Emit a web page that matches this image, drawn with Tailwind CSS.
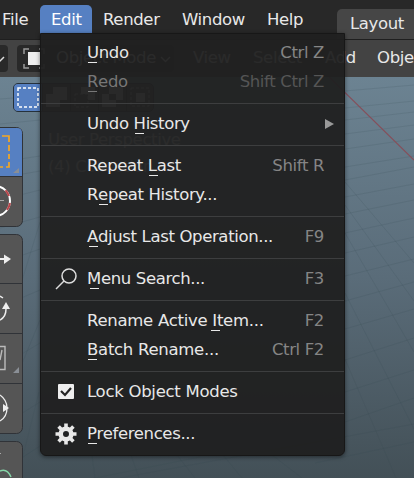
<!DOCTYPE html>
<html lang="en">
<head>
<meta charset="utf-8">
<title>Edit menu</title>
<script src="https://cdn.jsdelivr.net/npm/@tailwindcss/browser@4"></script>
</head>
<body class="relative h-[478px] w-[414px] overflow-hidden bg-[#50616c] font-['DejaVu_Sans',sans-serif] text-[16.5px] tracking-[-0.36px] text-[#e8e8e8]">
<!-- Top bar -->
<header class="flex h-[39px] items-center bg-[#282828] whitespace-nowrap leading-[29px]">
  <span class="w-[40px] shrink-0 pl-[2px]">File</span>
  <span class="mt-[-1px] h-[29px] w-[52px] shrink-0 rounded-t-[5px] bg-[#5680c2] pl-[11px] text-white">Edit</span>
  <span class="w-[79px] shrink-0 pl-[11px]">Render</span>
  <span class="w-[85px] shrink-0 pl-[11px]">Window</span>
  <span class="w-[81px] shrink-0 pl-[11px]">Help</span>
  <span class="mt-[9px] h-[30px] w-[80px] shrink-0 rounded-tl-[5px] bg-[#464646] pl-[13px] leading-[29px]">Layout</span>
</header>
<!-- Editor header -->
<div class="flex h-[38px] items-center border-t border-[#1f1f1f] bg-[#434343] whitespace-nowrap">
  <div class="flex h-[27px] w-[8px] shrink-0 items-center overflow-hidden rounded-r-[4px] bg-[#292929]"><svg class="shrink-0" width="8" height="27"><path d="M-3 13L0 16L4 12" fill="none" stroke="#ddd" stroke-width="1.5"/></svg></div>
  <div class="ml-[9px] flex h-[27px] w-[157px] shrink-0 items-center rounded-[4px] bg-[#292929]">
    <svg class="ml-[5px] mr-[11px] shrink-0" width="23" height="23"><path d="M2 7V2H7M17 2H22V7M2 17V21H7M17 21H22V17" fill="none" stroke="#999" stroke-width="1.5"/><path d="M6 5H18V18H6Z" fill="#eee"/></svg>
    <span class="w-[104px] shrink-0">Object Mode</span>
    <svg class="shrink-0" width="11" height="12"><path d="M1 4L5.500 8.500L10 4" fill="none" stroke="#ddd" stroke-width="1.5"/></svg>
  </div>
  <span class="ml-[19px] w-[60px] shrink-0">View</span>
  <span class="w-[72px] shrink-0">Select</span>
  <span class="w-[52px] shrink-0">Add</span>
  <span class="shrink-0">Object</span>
</div>
<!-- Viewport -->
<main class="relative h-[401px] overflow-hidden bg-linear-to-b from-[#6c8392] via-[#5a6c79] to-[#435057]">
  <svg class="absolute inset-0" width="414" height="401">
    <g stroke="#35454e" stroke-opacity=".14" fill="none">
      <path d="M0 22L40 19M0 47L40 43M0 85L40 79M0 101L40 94M0 123L40 113M0 151L40 140M0 186L40 172M0 230L40 213M0 290L40 266M0 350L40 325M0 395L40 369M0 420L200 380M120 401L414 347"/>
      <path d="M345 14L414 8M345 31L414 24M345 43L414 35M345 57L414 48M345 72L414 62M345 90L414 79M345 103L414 90M345 120L414 107M345 137L414 123M345 156L414 141M345 176L414 160M345 199L414 182M345 224L414 205M345 252L414 232M345 283L414 261M345 315L414 293M345 345L414 321M315 386L414 365"/>
      <path d="M20 210L40 145M0 340L40 243M20 391L39 315M92 378L95 401M131 378L139 401M177 378L195 401M223 378L242 401M272 378L302 401M345 282L396 401M345 216L414 352M345 156L414 275M345 128L414 224M345 105L414 186"/>
    </g>
    <path d="M325 -4L414 83" stroke="#854f5b" stroke-width="1.200"/>
  </svg>
  <!-- Selection modes -->
  <div class="absolute left-[13px] top-[6px] flex h-[29px] w-[141px] overflow-hidden rounded-[5px] border border-[#26313b] bg-[#555]">
    <div class="h-full w-[28px] shrink-0 bg-[#5680c2]"><svg width="28" height="27"><rect x="4" y="4" width="20" height="19" fill="none" stroke="#fff" stroke-width="1.500" stroke-dasharray="3 2"/></svg></div>
    <svg class="shrink-0 border-l border-[#333]" width="28" height="27"><path d="M3 23V10H10V3H24V16H17V23Z" fill="#ccc"/></svg>
    <svg class="shrink-0 border-l border-[#333]" width="28" height="27"><path d="M10 3H24V16H17V10H10Z" fill="#ccc"/><rect x="4" y="10" width="13" height="13" fill="none" stroke="#ccc" stroke-dasharray="3 2"/></svg>
    <svg class="shrink-0 border-l border-[#333]" width="28" height="27"><path d="M3 10H10V3H24V16H17V23H3ZM10 10V16H17V10Z" fill="#ccc" fill-rule="evenodd"/></svg>
    <svg class="shrink-0 border-l border-[#333]" width="28" height="27"><rect x="4" y="4" width="18" height="18" fill="none" stroke="#ccc" stroke-dasharray="3 2"/><path d="M9 9H18V18H9Z" fill="#ccc"/></svg>
  </div>
  <div class="absolute left-[48px] top-[49px] leading-[27px] text-white/90">User Perspective<br>(4) Collection</div>
  <!-- Toolbar -->
  <svg class="absolute left-0 top-0" width="24" height="401" fill="none">
    <g fill="#555" stroke="#303338">
      <rect x="-20" y="50.500" width="42.500" height="99" rx="6"/>
      <rect x="-20" y="157.500" width="42.500" height="199" rx="6"/>
      <rect x="-20" y="364.500" width="42.500" height="60" rx="6"/>
      <path d="M0 206.500H22M0 256.500H22M0 306.500H22"/>
    </g>
    <path d="M-20 51H17Q22 51 22 56V99H-20Z" fill="#5680c2"/>
    <path d="M0 99.500H22" stroke="#303338"/>
    <path d="M2 59H9V65M9 68V74M9 77V82M9 85V90H6M3 90H-1" stroke="#f5a623" stroke-width="1.700"/>
    <path d="M19 91V96H13ZM19 290V296H13Z" fill="#8a8f96"/>
    <circle cx="-5" cy="124" r="15" stroke="#fff" stroke-width="2"/>
    <path d="M5.500 113.300A15 15 0 0 1 9 119M10 126A15 15 0 0 1 7 133" stroke="#b8474c" stroke-width="2"/>
    <path d="M0 123.500H4" stroke="#aaa"/>
    <path d="M0 182H5" stroke="#eee" stroke-width="2"/><path d="M4 177.500L11 182L4 187Z" fill="#eee"/>
    <path d="M0 219L3 221M0 243Q6 240 6 232" stroke="#eee" stroke-width="1.500"/><path d="M6 225L10 232H2Z" fill="#eee"/>
    <path d="M0 269.500H5V292.500H0M0 283L2 273" stroke="#bbb" stroke-width="1.400"/>
    <path d="M0 318Q7 323 7 331Q7 340 0 344" stroke="#eee" stroke-width="1.300"/><path d="M3 327L9 331L3 335Z" fill="#eee"/>
    <path d="M0 377L1 376" stroke="#aaa"/><path d="M0 394Q7 391 11 400" stroke="#86d6a8" stroke-width="1.500"/>
  </svg>
</main>
<!-- Edit menu -->
<nav class="absolute left-[40px] top-[33px] w-[305px] rounded-b-[6px] border border-[#171717] bg-[#202020]/95 pt-[4px] pb-[7px] leading-[29px] whitespace-nowrap shadow-[0_1px_4px_rgba(0,0,0,0.5)]">
  <div class="flex h-[29px] justify-between pr-[20px] pl-[46px]"><span><span class="relative inline-block after:absolute after:left-px after:top-[24px] after:h-px after:w-[9px] after:bg-current">U</span>ndo</span><span class="text-[#858585]">Ctrl Z</span></div>
  <div class="flex h-[29px] justify-between pr-[20px] pl-[46px] text-[#777]"><span><span class="relative inline-block after:absolute after:left-px after:top-[24px] after:h-px after:w-[9px] after:bg-current">R</span>edo</span><span class="text-[#555]">Shift Ctrl Z</span></div>
  <hr class="mt-[7px] mb-[5px] border-[#3d3e3f]">
  <div class="flex h-[29px] items-center justify-between pr-[10px] pl-[46px]"><span>Undo <span class="relative inline-block after:absolute after:left-px after:top-[24px] after:h-px after:w-[9px] after:bg-current">H</span>istory</span><svg width="9" height="10"><path d="M0 0L9 5L0 10Z" fill="#999"/></svg></div>
  <hr class="mt-[7px] mb-[5px] border-[#3d3e3f]">
  <div class="flex h-[29px] justify-between pr-[20px] pl-[46px]"><span>Repeat <span class="relative inline-block after:absolute after:left-px after:top-[24px] after:h-px after:w-[9px] after:bg-current">L</span>ast</span><span class="text-[#858585]">Shift R</span></div>
  <div class="flex h-[29px] pl-[46px]"><span>R<span class="relative inline-block after:absolute after:left-px after:top-[24px] after:h-px after:w-[9px] after:bg-current">e</span>peat History...</span></div>
  <hr class="mt-[7px] mb-[5px] border-[#3d3e3f]">
  <div class="flex h-[29px] justify-between pr-[20px] pl-[46px]"><span><span class="relative inline-block after:absolute after:left-[2px] after:top-[24px] after:h-px after:w-[9px] after:bg-current">A</span>djust Last Operation...</span><span class="text-[#858585]">F9</span></div>
  <hr class="mt-[7px] mb-[5px] border-[#3d3e3f]">
  <div class="flex h-[29px] items-center pr-[20px] pl-[14px]"><svg class="mr-[10px]" width="22" height="22" fill="none" stroke="#ddd" stroke-width="1.500"><circle cx="14" cy="8" r="7"/><path d="M9 13L1 21"/></svg><span><span class="relative inline-block after:absolute after:left-[3px] after:top-[24px] after:h-px after:w-[9px] after:bg-current">M</span>enu Search...</span><span class="ml-auto text-[#858585]">F3</span></div>
  <hr class="mt-[7px] mb-[5px] border-[#3d3e3f]">
  <div class="flex h-[29px] justify-between pr-[20px] pl-[46px]"><span class="tracking-[-0.28px]">Rename Active <span class="relative inline-block after:absolute after:left-[-1px] after:top-[24px] after:h-px after:w-[9px] after:bg-current">I</span>tem...</span><span class="text-[#858585]">F2</span></div>
  <div class="flex h-[29px] justify-between pr-[20px] pl-[46px]"><span class="tracking-[-0.28px]"><span class="relative inline-block after:absolute after:left-px after:top-[24px] after:h-px after:w-[9px] after:bg-current">B</span>atch Rename...</span><span class="text-[#858585]">Ctrl F2</span></div>
  <hr class="mt-[7px] mb-[5px] border-[#3d3e3f]">
  <div class="flex h-[29px] items-center pl-[17px]"><svg class="mr-[13px]" width="16" height="16"><rect width="16" height="15" rx="1" fill="#eee"/><path d="M3 7L7 11L13 4" fill="none" stroke="#222" stroke-width="2.200"/></svg><span class="tracking-[-0.28px]">Lock Object Modes</span></div>
  <hr class="mt-[7px] mb-[5px] border-[#3d3e3f]">
  <div class="flex h-[29px] items-center pl-[14px]"><svg class="mr-[10px]" width="22" height="22" viewBox="-11 -11 22 22"><g stroke="#e8e8e8" stroke-width="3.600"><path d="M0 -10.500V-5M0 5V10.500M-10.500 0H-5M5 0H10.500M-7.400 -7.400L-4 -4M4 4L7.400 7.400M-7.400 7.400L-4 4M4 -4L7.400 -7.400"/><circle r="5.300" fill="none" stroke-width="4.600"/></g></svg><span><span class="relative inline-block after:absolute after:left-px after:top-[24px] after:h-px after:w-[9px] after:bg-current">P</span>references...</span></div>
</nav>
</body>
</html>
